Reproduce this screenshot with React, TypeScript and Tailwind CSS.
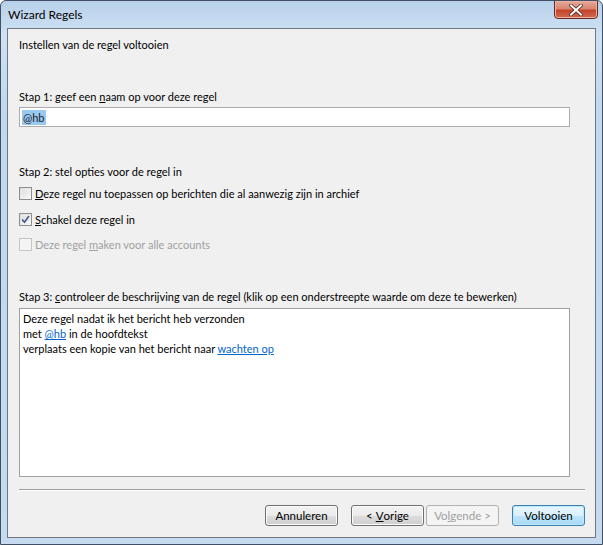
import React from "react";

const font = { fontFamily: 'Lato, "Noto Sans", Arial, sans-serif' };

function Checkbox({ checked, disabled }: { checked?: boolean; disabled?: boolean }) {
  return (
    <span
      className={
        "relative inline-flex h-[13px] w-[13px] shrink-0 items-center justify-center border " +
        (disabled ? "border-[#c5c5c5] bg-[#f4f4f4]" : "border-[#8e8f8f] bg-[linear-gradient(135deg,#d8d8d8,#fbfbfb)]")
      }
    >
      <span className={"absolute inset-[1px] border " + (disabled ? "border-[#f4f4f4]" : "border-[#f4f4f4]/70")} />
      {checked && (
        <svg width="9" height="9" viewBox="0 0 9 9" className="relative">
          <path d="M1 4.5 L3.5 7.2 L8 1" fill="none" stroke="#4a5e8c" strokeWidth="1.7" />
        </svg>
      )}
    </span>
  );
}

function Button({ children, disabled, primary }: { children: React.ReactNode; disabled?: boolean; primary?: boolean }) {
  let cls = "flex h-[21px] w-[73px] items-center justify-center rounded-[3px] border text-[11.5px] leading-none ";
  if (disabled) cls += "border-[#adb2b5] bg-[#f4f4f4] text-[#a0a0a0]";
  else if (primary)
    cls += "border-[#3c7fb1] bg-[linear-gradient(#eaf6fd_0%,#d9f0fc_50%,#bee6fd_51%,#a7d9f5_100%)] text-black shadow-[inset_0_0_0_1px_#bbe8fb]";
  else cls += "border-[#707070] bg-[linear-gradient(#f2f2f2_0%,#ebebeb_50%,#dddddd_51%,#cfcfcf_100%)] text-black shadow-[inset_0_0_0_1px_#fcfcfc]";
  return <div className={cls}>{children}</div>;
}

export default function App() {
  return (
    <div
      style={font}
      className="relative h-[545px] w-[603px] overflow-hidden rounded-t-[6px] border border-[#404f63] bg-[linear-gradient(180deg,#b8d0ea_0%,#cfe1f3_6%,#c2d8ee_20%,#c6dbf0_100%)] text-[11px] text-black"
    >
      <div className="flex h-[27px] items-center pl-[7px] text-[12px] text-black">Wizard Regels</div>

      <div className="absolute right-[4px] top-[-1px] flex h-[19px] w-[44px] items-center justify-center rounded-b-[4px] border border-[#6b2a20] bg-[linear-gradient(#e6a99b_0%,#d88571_45%,#c4452b_55%,#d06a50_100%)] shadow-[inset_0_0_0_1px_#eab2a4]">
        <svg width="14" height="12" viewBox="0 0 14 12">
          <path d="M2 1.5 L12 10.5 M12 1.5 L2 10.5" stroke="#5a2118" strokeWidth="3.6" strokeLinecap="square" />
          <path d="M2 1.5 L12 10.5 M12 1.5 L2 10.5" stroke="#ffffff" strokeWidth="2" strokeLinecap="square" />
        </svg>
      </div>

      <div className="mx-[6px] flex h-[510px] flex-col whitespace-nowrap border border-[#6e7784] bg-[#f0f0f0] pl-[11px] leading-[15px]">
        <p className="mt-[8px]">Instellen van de regel voltooien</p>

        <p className="mt-[37px]">
          Stap 1: geef een <span className="underline">n</span>aam op voor deze regel
        </p>
        <div className="mt-[3px] flex h-[20px] w-[551px] items-center border border-[#abadb3] bg-white pl-[2px]">
          <span className="bg-[#99c9ef] px-[1px] leading-[15px] text-[#1a1a2e]">@hb</span>
        </div>

        <p className="mt-[37px]">Stap 2: stel opties voor de regel in</p>
        <div className="mt-[7px] flex items-center gap-[3px]">
          <Checkbox />
          <span>
            <span className="underline">D</span>eze regel nu toepassen op berichten die al aanwezig zijn in archief
          </span>
        </div>
        <div className="mt-[11px] flex items-center gap-[3px]">
          <Checkbox checked />
          <span>
            <span className="underline">S</span>chakel deze regel in
          </span>
        </div>
        <div className="mt-[10px] flex items-center gap-[3px] text-[#a0a0a0]">
          <Checkbox disabled />
          <span>
            Deze regel <span className="underline">m</span>aken voor alle accounts
          </span>
        </div>

        <p className="mt-[37px]">
          Stap 3: <span className="underline">c</span>ontroleer de beschrijving van de regel (klik op een onderstreepte
          waarde om deze te bewerken)
        </p>
        <div className="mt-[4px] h-[169px] w-[551px] border border-[#a0a0a0] bg-white pl-[3px] pt-[2px]">
          <p>Deze regel nadat ik het bericht heb verzonden</p>
          <p>
            met <span className="text-[#0066cc] underline">@hb</span> in de hoofdtekst
          </p>
          <p>
            verplaats een kopie van het bericht naar <span className="text-[#0066cc] underline">wachten op</span>
          </p>
        </div>

        <div className="mt-[12px] w-[566px] border-b border-t border-b-white border-t-[#a0a0a0]" />

        <div className="mt-[14px] flex w-[566px] justify-end">
          <Button>Annuleren</Button>
          <div className="ml-[13px]">
            <Button>
              &lt; <span className="ml-[3px] underline">V</span>orige
            </Button>
          </div>
          <div className="ml-[2px]">
            <Button disabled>
              Vo<span className="underline">l</span>gende &gt;
            </Button>
          </div>
          <div className="ml-[13px]">
            <Button primary>Voltooien</Button>
          </div>
        </div>
      </div>
    </div>
  );
}
